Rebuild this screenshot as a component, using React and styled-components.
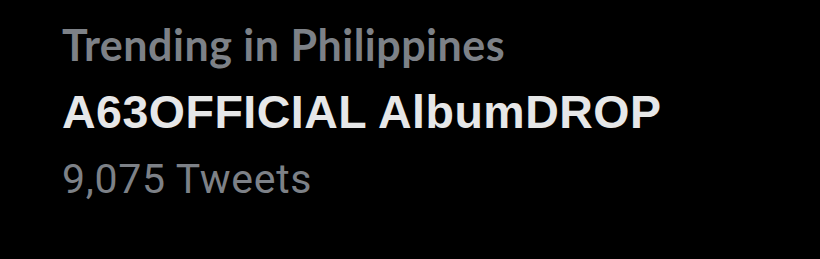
import React from 'react'
import styled, { createGlobalStyle } from 'styled-components'

const GlobalStyle = createGlobalStyle`
  html, body {
    margin: 0;
    padding: 0;
    background: #000;
  }
`

const Card = styled.div`
  width: 820px;
  height: 259px;
  box-sizing: border-box;
  background: #000;
  padding: 23px 0 0 62px;
  display: flex;
  flex-direction: column;
`

const Context = styled.div`
  font-family: Lato, 'Liberation Sans', sans-serif;
  font-weight: 700;
  font-size: 43px;
  line-height: 43px;
  letter-spacing: 0.5px;
  color: #7d8187;
`

const Topic = styled.div`
  font-family: 'Liberation Sans', Arial, sans-serif;
  font-weight: 700;
  font-size: 46.5px;
  line-height: 50px;
  letter-spacing: 0.5px;
  color: #e6e7e8;
  margin-top: 21px;
`

const Count = styled.div`
  font-family: Roboto, 'Liberation Sans', sans-serif;
  font-weight: 400;
  font-size: 41px;
  line-height: 44px;
  letter-spacing: 0.7px;
  color: #7d8187;
  margin-top: 20px;
`

const App = () => (
  <>
    <GlobalStyle />
    <Card>
      <Context>Trending in Philippines</Context>
      <Topic>A63OFFICIAL AlbumDROP</Topic>
      <Count>9,075 Tweets</Count>
    </Card>
  </>
)

export default App
